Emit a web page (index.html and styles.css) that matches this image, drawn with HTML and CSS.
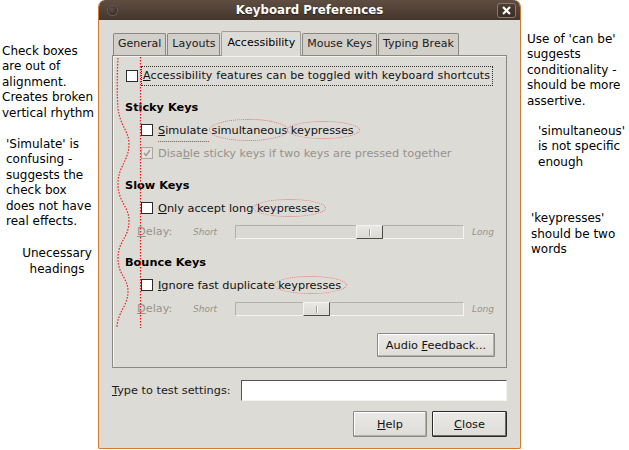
FILE: index.html
```html
<!DOCTYPE html>
<html lang="en">
<head>
    <meta charset="UTF-8">
    <title>Keyboard Preferences</title>
    <link rel="stylesheet" href="styles.css">
</head>
<body>
    <div class="page">
        <!-- Notes on the left -->
        <div class="notes notes-left">
            <p class="note note-check">Check boxes<br>are out of<br>alignment.<br>Creates broken<br>vertical rhythm</p>
            <p class="note note-simulate">'Simulate' is<br>confusing -<br>suggests the<br>check box<br>does not have<br>real effects.</p>
            <p class="note note-headings">Unecessary<br>headings</p>
        </div>

        <!-- Dialog -->
        <div class="window">
            <div class="titlebar">
                <div class="title-left"><span class="title-dot"></span></div>
                <div class="title">Keyboard Preferences</div>
                <div class="title-right">
                    <span class="title-close">
                        <svg width="9" height="9" viewBox="0 0 9 9"><path d="M1 1L8 8M8 1L1 8" stroke="#fff" stroke-width="2.2"/></svg>
                    </span>
                </div>
            </div>

            <div class="window-body">
                <div class="tabs">
                    <div class="tab">General</div>
                    <div class="tab">Layouts</div>
                    <div class="tab active">Accessibility</div>
                    <div class="tab">Mouse Keys</div>
                    <div class="tab">Typing Break</div>
                </div>

                <div class="panel">
                    <!-- review markup drawn over the panel -->
                    <svg class="markup" width="40" height="275" viewBox="0 0 40 275">
                        <path d="M5 2 C4 20 4 40 5 52 C7 70 16 75 16 88 C16 105 5 110 5 128 C5 146 16 150 16 165 C16 182 5 185 5 202 C5 219 15 222 15 235 C15 250 5 255 4 271" fill="none" stroke="#ec1c1c" stroke-width="1.2" stroke-dasharray="1.5 1.5"/>
                        <path d="M27.5 1 L27.5 272" fill="none" stroke="#ec1c1c" stroke-width="1.2" stroke-dasharray="1.5 1.5"/>
                    </svg>

                    <div class="row row-main">
                        <span class="check"></span>
                        <span class="focus-label"><u>A</u>ccessibility features can be toggled with keyboard shortcuts</span>
                    </div>

                    <div class="group">
                        <div class="group-title">Sticky Keys</div>
                        <div class="row row-sub">
                            <span class="check"></span>
                            <span class="label"><span class="underlined"><u>S</u>imulate</span> <span class="circled circled-wide">simultaneous</span> <span class="circled">keypresses</span></span>
                        </div>
                        <div class="row row-sub disabled">
                            <span class="check checked">
                                <svg width="10" height="10" viewBox="0 0 10 10"><path d="M2 5L4 7.5L8 2" fill="none" stroke="#9d9a94" stroke-width="1.4"/></svg>
                            </span>
                            <span class="label">Disa<u>b</u>le sticky keys if two keys are pressed together</span>
                        </div>
                    </div>

                    <div class="group">
                        <div class="group-title">Slow Keys</div>
                        <div class="row row-sub">
                            <span class="check"></span>
                            <span class="label"><u>O</u>nly accept long <span class="circled">keypresses</span></span>
                        </div>
                        <div class="delay-row">
                            <span class="delay-label"><u>D</u>elay:</span>
                            <span class="delay-short">Short</span>
                            <div class="slider"><span class="thumb" style="margin-left: 120px"></span></div>
                            <span class="delay-long">Long</span>
                        </div>
                    </div>

                    <div class="group">
                        <div class="group-title">Bounce Keys</div>
                        <div class="row row-sub">
                            <span class="check"></span>
                            <span class="label"><u>I</u>gnore fast duplicate <span class="circled">keypresses</span></span>
                        </div>
                        <div class="delay-row">
                            <span class="delay-label"><u>D</u>elay:</span>
                            <span class="delay-short">Short</span>
                            <div class="slider"><span class="thumb" style="margin-left: 67px"></span></div>
                            <span class="delay-long">Long</span>
                        </div>
                    </div>

                    <div class="panel-actions">
                        <button class="btn btn-audio">Audio <u>F</u>eedback...</button>
                    </div>
                </div>

                <div class="test-row">
                    <span class="test-label"><u>T</u>ype to test settings:</span>
                    <div class="test-input"></div>
                </div>

                <div class="dialog-buttons">
                    <button class="btn btn-help"><u>H</u>elp</button>
                    <button class="btn btn-close"><u>C</u>lose</button>
                </div>
            </div>
        </div>

        <!-- Notes on the right -->
        <div class="notes notes-right">
            <p class="note note-canbe">Use of 'can be'<br>suggests<br>conditionality -<br>should be more<br>assertive.</p>
            <p class="note note-simultaneous">'simultaneous'<br>is not specific<br>enough</p>
            <p class="note note-keypresses">'keypresses'<br>should be two<br>words</p>
        </div>
    </div>
</body>
</html>
```

FILE: styles.css
```css
body {
    margin: 0;
    background: #fff;
    font-family: "DejaVu Sans", sans-serif;
    color: #111;
}
.page {
    display: flex;
    width: 629px;
    height: 450px;
    overflow: hidden;
}

/* notes */
.notes {
    font-size: 12px;
    line-height: 15.4px;
    color: #000;
}
.note {
    margin: 0;
}
.notes-left {
    width: 98px;
    flex: none;
}
.notes-right {
    flex: 1;
}
.note-check {
    padding: 44px 0 0 2px;
}
.note-simulate {
    padding: 16px 0 0 6px;
}
.note-headings {
    padding: 17px 0 0 16px;
    text-align: center;
}
.note-canbe {
    padding: 32px 0 0 6px;
}
.note-simultaneous {
    padding: 15px 0 0 17px;
}
.note-keypresses {
    padding: 41px 0 0 10px;
}

/* window */
.window {
    flex: none;
    width: 423px;
    height: 449px;
    box-sizing: border-box;
    border: 1px solid #cf7a2e;
    border-top: 0;
    border-radius: 7px 7px 2px 2px;
    background: #dddbd6;
    display: flex;
    flex-direction: column;
    overflow: hidden;
}
.titlebar {
    flex: none;
    height: 20px;
    display: flex;
    align-items: center;
    background: linear-gradient(#5f4d41, #44362d);
    border-radius: 6px 6px 0 0;
}
.title-left, .title-right {
    width: 23px;
    display: flex;
    align-items: center;
}
.title-left {
    padding-left: 9px;
    box-sizing: border-box;
}
.title-dot {
    width: 9px;
    height: 9px;
    border-radius: 50%;
    background: radial-gradient(circle at 40% 35%, #5d5047, #2f2620);
    box-shadow: 0 0 0 1px #6b5a4d;
}
.title {
    flex: 1;
    text-align: center;
    color: #fff;
    font-weight: bold;
    font-size: 11.8px;
    text-shadow: 0 1px 1px #2a201a;
}
.title-close {
    width: 17px;
    height: 13px;
    border: 1px solid #8a7868;
    border-radius: 3px;
    background: linear-gradient(#4d3e34, #382c24);
    display: flex;
    align-items: center;
    justify-content: center;
}

.window-body {
    flex: 1;
    padding: 11px 13px 0;
    display: flex;
    flex-direction: column;
    font-size: 11.3px;
}

/* tabs */
.tabs {
    display: flex;
    align-items: flex-end;
    height: 24px;
    padding-left: 1px;
    font-size: 11px;
}
.tab {
    height: 22px;
    box-sizing: border-box;
    padding: 0 4px;
    border: 1px solid #8b8882;
    border-bottom: 0;
    border-radius: 2px 2px 0 0;
    background: #d2cfc9;
    line-height: 19px;
    color: #1a1a1a;
    margin-right: 1px;
}
.tab.active {
    position: relative;
    z-index: 1;
    height: 25px;
    margin-bottom: -1px;
    padding: 0 5px;
    background: #dddbd6;
    border-color: #a19e98;
    line-height: 21px;
    color: #000;
}

/* notebook page */
.panel {
    position: relative;
    border: 1px solid #8b8882;
    box-shadow: inset 1px 1px 0 #f4f3f1;
    padding: 10px 11px 10px 13px;
}
.markup {
    position: absolute;
    left: 0;
    top: 0;
    z-index: 2;
}
.row {
    display: flex;
    align-items: center;
}
.row-main {
    height: 20px;
}
.row-sub {
    height: 22px;
    margin: 1px 0 0 15px;
}
.group-title + .row-sub {
    margin-top: 2px;
}
.group {
    margin-top: 13px;
}
.group-title {
    height: 18px;
    line-height: 18px;
    font-weight: bold;
    margin-left: -1px;
    color: #000;
}
.check {
    flex: none;
    width: 12px;
    height: 12px;
    box-sizing: border-box;
    border: 1px solid #2b2b2b;
    background: #fff;
    display: flex;
    align-items: center;
    justify-content: center;
}
.row-main .check {
    margin-right: 3px;
}
.row-sub .check {
    margin-right: 5px;
}
.focus-label {
    border: 1px dotted #333;
    padding: 2px 2px 2px 1px;
    line-height: 14px;
    font-size: 11px;
    letter-spacing: 0.14px;
}
.disabled .label {
    color: #96928c;
}
.check.checked {
    border-color: #aaa6a0;
    background: #e4e2de;
}
.underlined {
    position: relative;
}
.underlined::after {
    content: "";
    position: absolute;
    left: 0;
    right: -1px;
    bottom: -5px;
    border-bottom: 1px dotted #e84848;
}
.circled {
    position: relative;
}
.circled::after {
    content: "";
    position: absolute;
    left: -4px;
    right: -6px;
    top: -3px;
    bottom: -2px;
    border: 1px dotted #ec6868;
    border-radius: 50%;
}
.circled-wide::after {
    left: -3px;
    right: -1px;
    top: -5px;
    bottom: -4px;
}

/* delay sliders */
.delay-row {
    display: flex;
    align-items: center;
    height: 19px;
    margin: 3px 0 0 11px;
    color: #96928c;
}
.delay-label {
    width: 56px;
}
.delay-short {
    width: 42px;
    font-size: 9px;
    font-style: italic;
}
.delay-long {
    margin-left: 8px;
    font-size: 9px;
    font-style: italic;
}
.slider {
    width: 229px;
    height: 14px;
    box-sizing: border-box;
    border: 1px solid #f6f5f3;
    border-top-color: #b3b0aa;
    border-left-color: #b3b0aa;
    background: #dad8d3;
    display: flex;
}
.thumb {
    width: 27px;
    height: 14px;
    margin-top: -1px;
    box-sizing: border-box;
    border: 1px solid #4e4c49;
    border-top-color: #f4f3f1;
    border-left-color: #f4f3f1;
    background: linear-gradient(#e9e7e3, #dcdad5);
    position: relative;
}
.thumb::after {
    content: "";
    position: absolute;
    left: 12px;
    top: 3px;
    width: 1px;
    height: 7px;
    background: #a19e98;
    box-shadow: 1px 0 0 #fff;
}

/* buttons */
.btn {
    font-family: "DejaVu Sans", sans-serif;
    font-size: 11.3px;
    color: #111;
    background: linear-gradient(#ebe9e5, #dfddd8);
    border: 1px solid #8b8882;
    border-radius: 1px;
    box-shadow: inset -1px -1px 0 #b4b1ab, inset 1px 1px 0 #fff;
    padding: 0;
}
.panel-actions {
    display: flex;
    justify-content: flex-end;
    margin-top: 15px;
}
.btn-audio {
    width: 118px;
    height: 24px;
}
.test-row {
    display: flex;
    align-items: center;
    height: 21px;
    margin-top: 12px;
}
.test-label {
    width: 129px;
    color: #1a1a1a;
}
.test-input {
    flex: 1;
    height: 21px;
    box-sizing: border-box;
    background: #fff;
    border: 1px solid #f4f3f1;
    border-top-color: #55524e;
    border-left-color: #55524e;
}
.dialog-buttons {
    display: flex;
    justify-content: flex-end;
    gap: 5px;
    margin-top: 10px;
}
.btn-help {
    width: 74px;
    height: 26px;
}
.btn-close {
    width: 75px;
    height: 26px;
    border: 1px solid #2a2a2a;
    box-shadow: inset -1px -1px 0 #6e6b66, inset 1px 1px 0 #fff;
}
```
